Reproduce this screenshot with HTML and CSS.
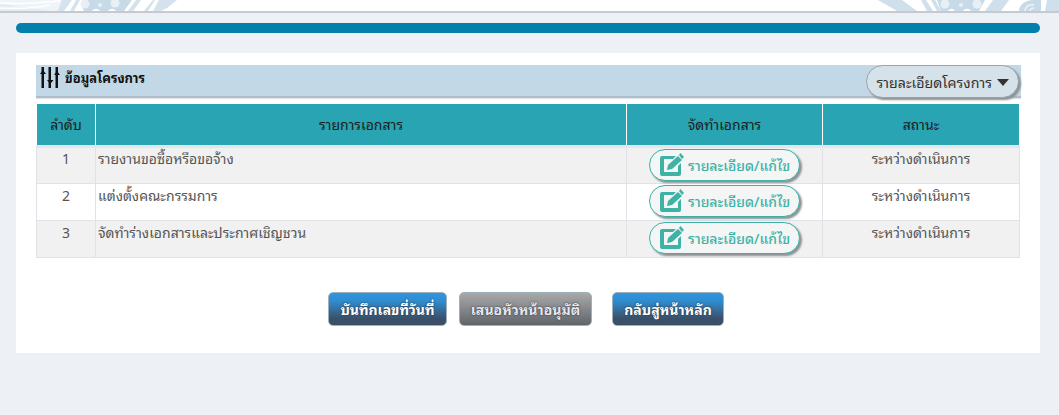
FILE: index.html
```html
<!DOCTYPE html>
<html lang="th">
<head>
<meta charset="utf-8">
<title>ข้อมูลโครงการ</title>
<link rel="stylesheet" href="styles.css">
</head>
<body>
<header class="topbar">
  <svg class="deco" width="190" height="11" viewBox="0 0 190 11" aria-hidden="true">
    <rect width="62" height="11" fill="#e3edf4"/>
    <path d="M62 0H0v3C18 7 42 9 50 11h8z" fill="#eef4f8"/>
    <g fill="none" stroke="#fff" stroke-width="1.5"><path d="M0 3C20 4 40 3 60 1M0 8C20 9 36 8 50 5"/></g>
    <path d="M62 0h10l-8 11h-6zM76 0h4l-6 11h-4z" fill="#d5e3ee"/>
    <path d="M84 11c-4-6 0-11 2-11h46l-8 11h-8c-2-3-6-3-8 0h-8c-2-3-6-3-8 0z" fill="#c6dae8"/>
    <circle cx="85" cy="4" r="4.5" fill="#e8f0f6"/>
    <circle cx="115" cy="3" r="4.5" fill="#e8f0f6"/>
    <circle cx="100" cy="5" r="2" fill="#e8f0f6"/>
    <path d="M128 11l8-11h5l-8 11zM144 11l9-11h24l-10 8-6 3h-8l6-11h-4l-7 11z" fill="#d3e2ed"/>
  </svg>
  <svg class="deco" width="190" height="11" viewBox="0 0 190 11" aria-hidden="true">
    <path d="M9 0h24l15 11H28zM52 0h5l7 11h-6zM62 0h4l6 11h-4z" fill="#cfdfeb"/>
    <path d="M72 11l-4-11h48l-6 11h-8c-2-3-6-3-8 0H86c-2-3-5-3-7 0z" fill="#c6dae8"/>
    <circle cx="76" cy="4" r="4.5" fill="#e8f0f6"/>
    <circle cx="108" cy="4" r="4.5" fill="#e8f0f6"/>
    <circle cx="92" cy="5" r="2" fill="#e8f0f6"/>
    <path d="M124 0h16l-8 11h-16z" fill="#cfdfeb"/>
    <path d="M150 11c0-6 6-11 14-11h8v11z" fill="#c6dae8"/>
    <path d="M156 11c0-4 4-7 9-6M161 11c0-2 2-3 4-3" fill="none" stroke="#eef4f8" stroke-width="1.5"/>
    <path d="M178 0h12v11h-14z" fill="#cfdfeb"/>
  </svg>
</header>
<main class="page">
  <div class="titlebar"></div>
  <section class="card">
    <div class="panel-head">
      <div class="panel-title">
        <svg class="sliders" width="20" height="21" viewBox="0 0 20 21" aria-hidden="true">
          <g fill="#111"><rect x="1.5" y="0" width="2.5" height="21"/><rect x="8.5" y="0" width="2.5" height="21"/><rect x="15.5" y="0" width="2.5" height="21"/><path d="M0 7l3-4 3 4zM7 13h6.5l-3.2 4zM14 8l3-4 3 4z"/></g>
        </svg>
        <span>ข้อมูลโครงการ</span>
      </div>
      <button class="detail-toggle" type="button">รายละเอียดโครงการ <span class="caret"></span></button>
    </div>
    <table class="docs">
      <thead>
        <tr><th class="c-no">ลำดับ</th><th>รายการเอกสาร</th><th class="c-act">จัดทำเอกสาร</th><th class="c-st">สถานะ</th></tr>
      </thead>
      <tbody>
        <tr><td class="center">1</td><td>รายงานขอซื้อหรือขอจ้าง</td><td class="center"><button class="edit" type="button"><svg width="25" height="24" viewBox="0 0 25 24" aria-hidden="true"><path class="ico" d="M3 3h14l-3 3H5v13h14v-6l3-3v11a2 2 0 0 1-2 2H3a2 2 0 0 1-2-2V5a2 2 0 0 1 2-2z"/><path class="ico" d="M9 12L19 3l4 4-10 9-5 1zM20 2l1.5-2 3.500 4-2 2z"/></svg>รายละเอียด/แก้ไข</button></td><td class="center">ระหว่างดำเนินการ</td></tr>
        <tr><td class="center">2</td><td>แต่งตั้งคณะกรรมการ</td><td class="center"><button class="edit" type="button"><svg width="25" height="24" viewBox="0 0 25 24" aria-hidden="true"><path class="ico" d="M3 3h14l-3 3H5v13h14v-6l3-3v11a2 2 0 0 1-2 2H3a2 2 0 0 1-2-2V5a2 2 0 0 1 2-2z"/><path class="ico" d="M9 12L19 3l4 4-10 9-5 1zM20 2l1.5-2 3.500 4-2 2z"/></svg>รายละเอียด/แก้ไข</button></td><td class="center">ระหว่างดำเนินการ</td></tr>
        <tr><td class="center">3</td><td>จัดทำร่างเอกสารและประกาศเชิญชวน</td><td class="center"><button class="edit" type="button"><svg width="25" height="24" viewBox="0 0 25 24" aria-hidden="true"><path class="ico" d="M3 3h14l-3 3H5v13h14v-6l3-3v11a2 2 0 0 1-2 2H3a2 2 0 0 1-2-2V5a2 2 0 0 1 2-2z"/><path class="ico" d="M9 12L19 3l4 4-10 9-5 1zM20 2l1.5-2 3.500 4-2 2z"/></svg>รายละเอียด/แก้ไข</button></td><td class="center">ระหว่างดำเนินการ</td></tr>
      </tbody>
    </table>
    <div class="actions">
      <button class="btn blue save" type="button">บันทึกเลขที่วันที่</button>
      <button class="btn grey propose" type="button">เสนอหัวหน้าอนุมัติ</button>
      <button class="btn blue back" type="button">กลับสู่หน้าหลัก</button>
    </div>
  </section>
</main>
</body>
</html>
```
FILE: styles.css
```css
* { box-sizing: border-box; }
html, body { margin: 0; height: 100%; }
body {
  background: #edf0f5;
  font-family: Tahoma, Leelawadee, "Noto Sans Thai Looped", Loma, Garuda, "Noto Sans", "Noto Sans Thai", "DejaVu Sans", sans-serif;
  font-size: 14px;
  color: #444;
  overflow: hidden;
}
.topbar {
  height: 13px;
  background: #fff;
  border-bottom: 2px solid #c6c9cf;
  display: flex;
  justify-content: space-between;
  overflow: hidden;
}
.deco { display: block; }
.page { padding: 10px 19px 0 16px; }
.titlebar { height: 10px; background: #0080ab; border-radius: 5px; }
.card {
  margin-top: 20px;
  height: 300px;
  background: #fff;
  padding: 12px 19px 0 20px;
}
.panel-head {
  height: 33px;
  background: #c3d8e6;
  border-bottom: 2px solid #aebfcc;
  display: flex;
  justify-content: space-between;
  padding-left: 4px;
  box-shadow: 0 1px 1px #e2e6ea;
}
.panel-title { display: flex; align-items: center; gap: 5px; color: #111; font-size: 13px; font-weight: 700; height: 24px; }
.sliders { flex: none; }
.detail-toggle {
  margin: 0 2px 0 0;
  width: 153px;
  height: 33px;
  border: 1px solid #9aa4aa;
  border-radius: 17px;
  background: #d5e2ea;
  box-shadow: 2px 2px 2px #8d9296;
  color: #333;
  font: inherit;
  font-size: 14.2px;
  padding: 0;
  white-space: nowrap;
}
.caret {
  display: inline-block;
  width: 0; height: 0;
  border-left: 6px solid transparent;
  border-right: 6px solid transparent;
  border-top: 7px solid #333;
  margin-left: 1px;
  vertical-align: 2px;
}
.docs {
  width: 984px;
  margin: 6px 0 0 0;
  border-collapse: collapse;
  table-layout: fixed;
}
.docs th {
  height: 42px;
  background: #29a4b2;
  color: #1c1c1c;
  font-weight: 400;
  font-size: 14px;
  line-height: 20px;
  border: 1px solid #fff;
  border-top: 0;
  border-bottom: 3px solid #e3e6ea;
  padding: 0;
}
.docs td {
  height: 37px;
  border: 1px solid #dfe2e6;
  padding: 0 2px 14px;
  font-size: 14px;
  line-height: 20px;
  color: #555;
  vertical-align: middle;
}
.docs tbody tr:nth-child(odd) td { background: #f1f1f1; }
.docs td.center { text-align: center; }
.c-no { width: 59px; }
.c-act { width: 196px; }
.c-st { width: 197px; }
.docs td:nth-child(3) { padding: 1px 0 0; vertical-align: top; line-height: 0; }
.edit {
  display: inline-flex;
  align-items: center;
  justify-content: center;
  gap: 4px;
  width: 151px;
  height: 32px;
  border: 1px solid #3cb1a4;
  border-radius: 16px;
  background: #f4f5f5;
  box-shadow: 2px 2px 2px #8d9296;
  color: #3fb2a6;
  font: inherit;
  font-size: 14px;
  font-weight: 500;
  line-height: 20px;
  padding: 0;
  white-space: nowrap;
  vertical-align: top;
}
.ico { fill: #3fb2a6; }
.actions {
  display: flex;
  margin-top: 34px;
  padding-left: 292px;
}
.btn {
  height: 34px;
  border: 1px solid #9fb0bd;
  border-radius: 5px;
  color: #fff;
  font: inherit;
  font-size: 14px;
  font-weight: 700;
  padding: 0;
  white-space: nowrap;
  text-shadow: 0 0 2px #223;
}
.blue { background: linear-gradient(#2f95de 0%, #2f8dd0 25%, #3a5068 80%, #3a5068 100%); }
.grey { background: linear-gradient(#a9a9a9, #60656b); color: #e6e8ee; }
.save { width: 119px; }
.propose { width: 133px; margin-left: 12px; }
.back { width: 112px; margin-left: 20px; }
```
